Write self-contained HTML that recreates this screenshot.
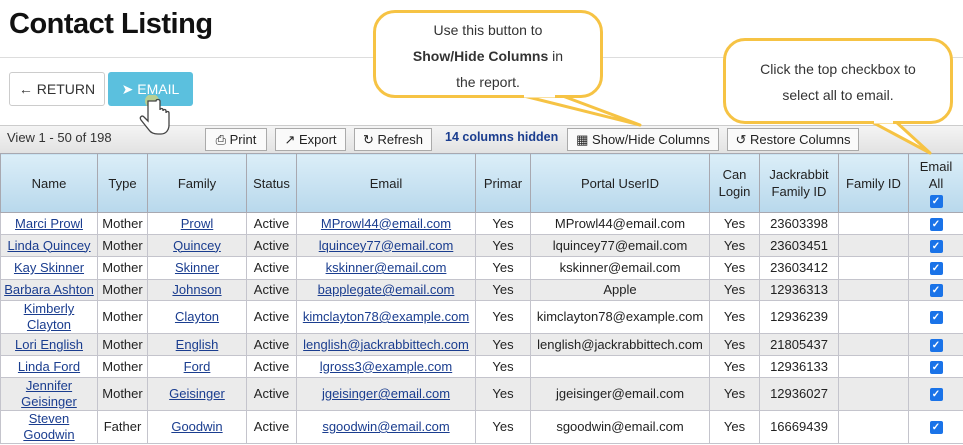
<!DOCTYPE html>
<html><head><style>
*{box-sizing:border-box;margin:0;padding:0}
body{width:963px;height:445px;overflow:hidden;background:#fff;font-family:"Liberation Sans",sans-serif;position:relative;color:#222}
h1{position:absolute;left:9px;top:8px;font-size:29px;font-weight:bold;color:#111;letter-spacing:-0.5px}
.hr{position:absolute;left:0;top:57px;width:963px;height:1px;background:#ddd}
.btn{position:absolute;top:72px;height:34px;border-radius:3px;font-size:14px;display:flex;align-items:center;justify-content:center}
.ret{left:9px;width:96px;border:1px solid #ccc;color:#333}
.em{left:108px;width:85px;background:#5bc0de;color:#fff}
.bar{position:absolute;left:0;top:125px;width:963px;height:28px;background:linear-gradient(#f4f4f4,#e2e2e2);border-top:1px solid #ccc}
.bar span{position:absolute;top:4px;font-size:13px}
.tb{position:absolute;top:128px;height:23px;border:1px solid #aaa;background:#fafafa;font-size:13px;display:flex;align-items:center;justify-content:center;gap:8px;color:#222}
table{position:absolute;left:0;top:153px;border-collapse:collapse;table-layout:fixed;width:963px;font-size:13px}
th{background:linear-gradient(#dbeef8,#b8d8ec);font-weight:normal;color:#222;border:1px solid #a8a8b0;height:59px;line-height:17px}
td{border:1px solid #c4c4cc;text-align:center;white-space:nowrap;line-height:16px;overflow:hidden}
tr.g td{background:#ebebeb}
a{color:#1a3d8f;text-decoration:underline}
.cb{display:inline-block;width:13px;height:13px;background:#1a73e8;border-radius:2px;color:#fff;font-size:10px;line-height:13px;font-weight:bold;vertical-align:middle}
.call{position:absolute;border:3px solid #f6c344;border-radius:22px;background:#fff;text-align:center;font-size:14px;color:#333;line-height:26px}
</style></head><body>
<h1>Contact Listing</h1>
<div class="hr"></div>
<div class="btn ret">&#8592; RETURN</div>
<div class="btn em">&#10148; EMAIL</div>
<div class="bar"><span style="left:7px;color:#333">View 1 - 50 of 198</span><span style="left:445px;color:#1a3d8f;font-weight:bold;font-size:12.5px">14 columns hidden</span></div>
<svg style="position:absolute;left:138px;top:95px;z-index:5" width="36" height="45" viewBox="0 0 36 45"><circle cx="14" cy="6" r="7" fill="#f6d860" opacity=".6"/><path d="M10 6v20l-4-4c-2-2-5 0-3 3l8 10c2 3 5 4 9 4h3c5 0 8-4 8-9V18c0-2-3-2-3 0v-2c0-2-3-2-3 0v-1c0-2-3-2-3 0V6c0-2-4-2-4 0z" fill="#fff" stroke="#444" stroke-width="1.3"/></svg>
<div class="tb" style="left:205px;width:62px">&#9113; Print</div>
<div class="tb" style="left:275px;width:71px">&#8599; Export</div>
<div class="tb" style="left:354px;width:78px">&#8635; Refresh</div>
<div class="tb" style="left:567px;width:152px">&#9638; Show/Hide Columns</div>
<div class="tb" style="left:727px;width:132px">&#8634; Restore Columns</div>
<table>
<colgroup><col style="width:97px"><col style="width:50px"><col style="width:99px"><col style="width:50px"><col style="width:179px"><col style="width:55px"><col style="width:179px"><col style="width:50px"><col style="width:79px"><col style="width:70px"><col style="width:55px"></colgroup>
<tr><th>Name</th><th>Type</th><th>Family</th><th>Status</th><th>Email</th><th>Primar</th><th>Portal UserID</th><th>Can<br>Login</th><th>Jackrabbit<br>Family ID</th><th>Family ID</th><th>Email<br>All<br><span class="cb">&#10003;</span></th></tr>
<tr style="height:22px"><td><a>Marci Prowl</a></td><td>Mother</td><td><a>Prowl</a></td><td>Active</td><td><a>MProwl44@email.com</a></td><td>Yes</td><td>MProwl44@email.com</td><td>Yes</td><td>23603398</td><td></td><td><span class="cb">&#10003;</span></td></tr>
<tr class="g" style="height:22px"><td><a>Linda Quincey</a></td><td>Mother</td><td><a>Quincey</a></td><td>Active</td><td><a>lquincey77@email.com</a></td><td>Yes</td><td>lquincey77@email.com</td><td>Yes</td><td>23603451</td><td></td><td><span class="cb">&#10003;</span></td></tr>
<tr style="height:23px"><td><a>Kay Skinner</a></td><td>Mother</td><td><a>Skinner</a></td><td>Active</td><td><a>kskinner@email.com</a></td><td>Yes</td><td>kskinner@email.com</td><td>Yes</td><td>23603412</td><td></td><td><span class="cb">&#10003;</span></td></tr>
<tr class="g" style="height:21px"><td><a>Barbara Ashton</a></td><td>Mother</td><td><a>Johnson</a></td><td>Active</td><td><a>bapplegate@email.com</a></td><td>Yes</td><td>Apple</td><td>Yes</td><td>12936313</td><td></td><td><span class="cb">&#10003;</span></td></tr>
<tr style="height:33px"><td><a>Kimberly<br>Clayton</a></td><td>Mother</td><td><a>Clayton</a></td><td>Active</td><td><a>kimclayton78@example.com</a></td><td>Yes</td><td>kimclayton78@example.com</td><td>Yes</td><td>12936239</td><td></td><td><span class="cb">&#10003;</span></td></tr>
<tr class="g" style="height:22px"><td><a>Lori English</a></td><td>Mother</td><td><a>English</a></td><td>Active</td><td><a>lenglish@jackrabbittech.com</a></td><td>Yes</td><td>lenglish@jackrabbittech.com</td><td>Yes</td><td>21805437</td><td></td><td><span class="cb">&#10003;</span></td></tr>
<tr style="height:22px"><td><a>Linda Ford</a></td><td>Mother</td><td><a>Ford</a></td><td>Active</td><td><a>lgross3@example.com</a></td><td>Yes</td><td></td><td>Yes</td><td>12936133</td><td></td><td><span class="cb">&#10003;</span></td></tr>
<tr class="g" style="height:33px"><td><a>Jennifer<br>Geisinger</a></td><td>Mother</td><td><a>Geisinger</a></td><td>Active</td><td><a>jgeisinger@email.com</a></td><td>Yes</td><td>jgeisinger@email.com</td><td>Yes</td><td>12936027</td><td></td><td><span class="cb">&#10003;</span></td></tr>
<tr style="height:33px"><td><a>Steven<br>Goodwin</a></td><td>Father</td><td><a>Goodwin</a></td><td>Active</td><td><a>sgoodwin@email.com</a></td><td>Yes</td><td>sgoodwin@email.com</td><td>Yes</td><td>16669439</td><td></td><td><span class="cb">&#10003;</span></td></tr>
</table>
<svg style="position:absolute;left:0;top:0" width="963" height="160"><path d="M520 95 L640 125 L560 95Z" fill="#fff" stroke="#f6c344" stroke-width="3" stroke-linejoin="round"/><path d="M870 121 L930 153 L895 121Z" fill="#fff" stroke="#f6c344" stroke-width="3" stroke-linejoin="round"/></svg>
<div class="call" style="left:373px;top:10px;width:230px;height:88px;padding-top:4px">Use this button to<br><b>Show/Hide Columns</b> in<br>the report.</div>
<div class="call" style="left:723px;top:38px;width:230px;height:86px;padding-top:15px">Click the top checkbox to<br>select all to email.</div>
<svg style="position:absolute;left:0;top:0" width="963" height="160"><path d="M524 96 L555 96" stroke="#fff" stroke-width="3"/><path d="M874 122 L893 122" stroke="#fff" stroke-width="3"/></svg>
</body></html>
